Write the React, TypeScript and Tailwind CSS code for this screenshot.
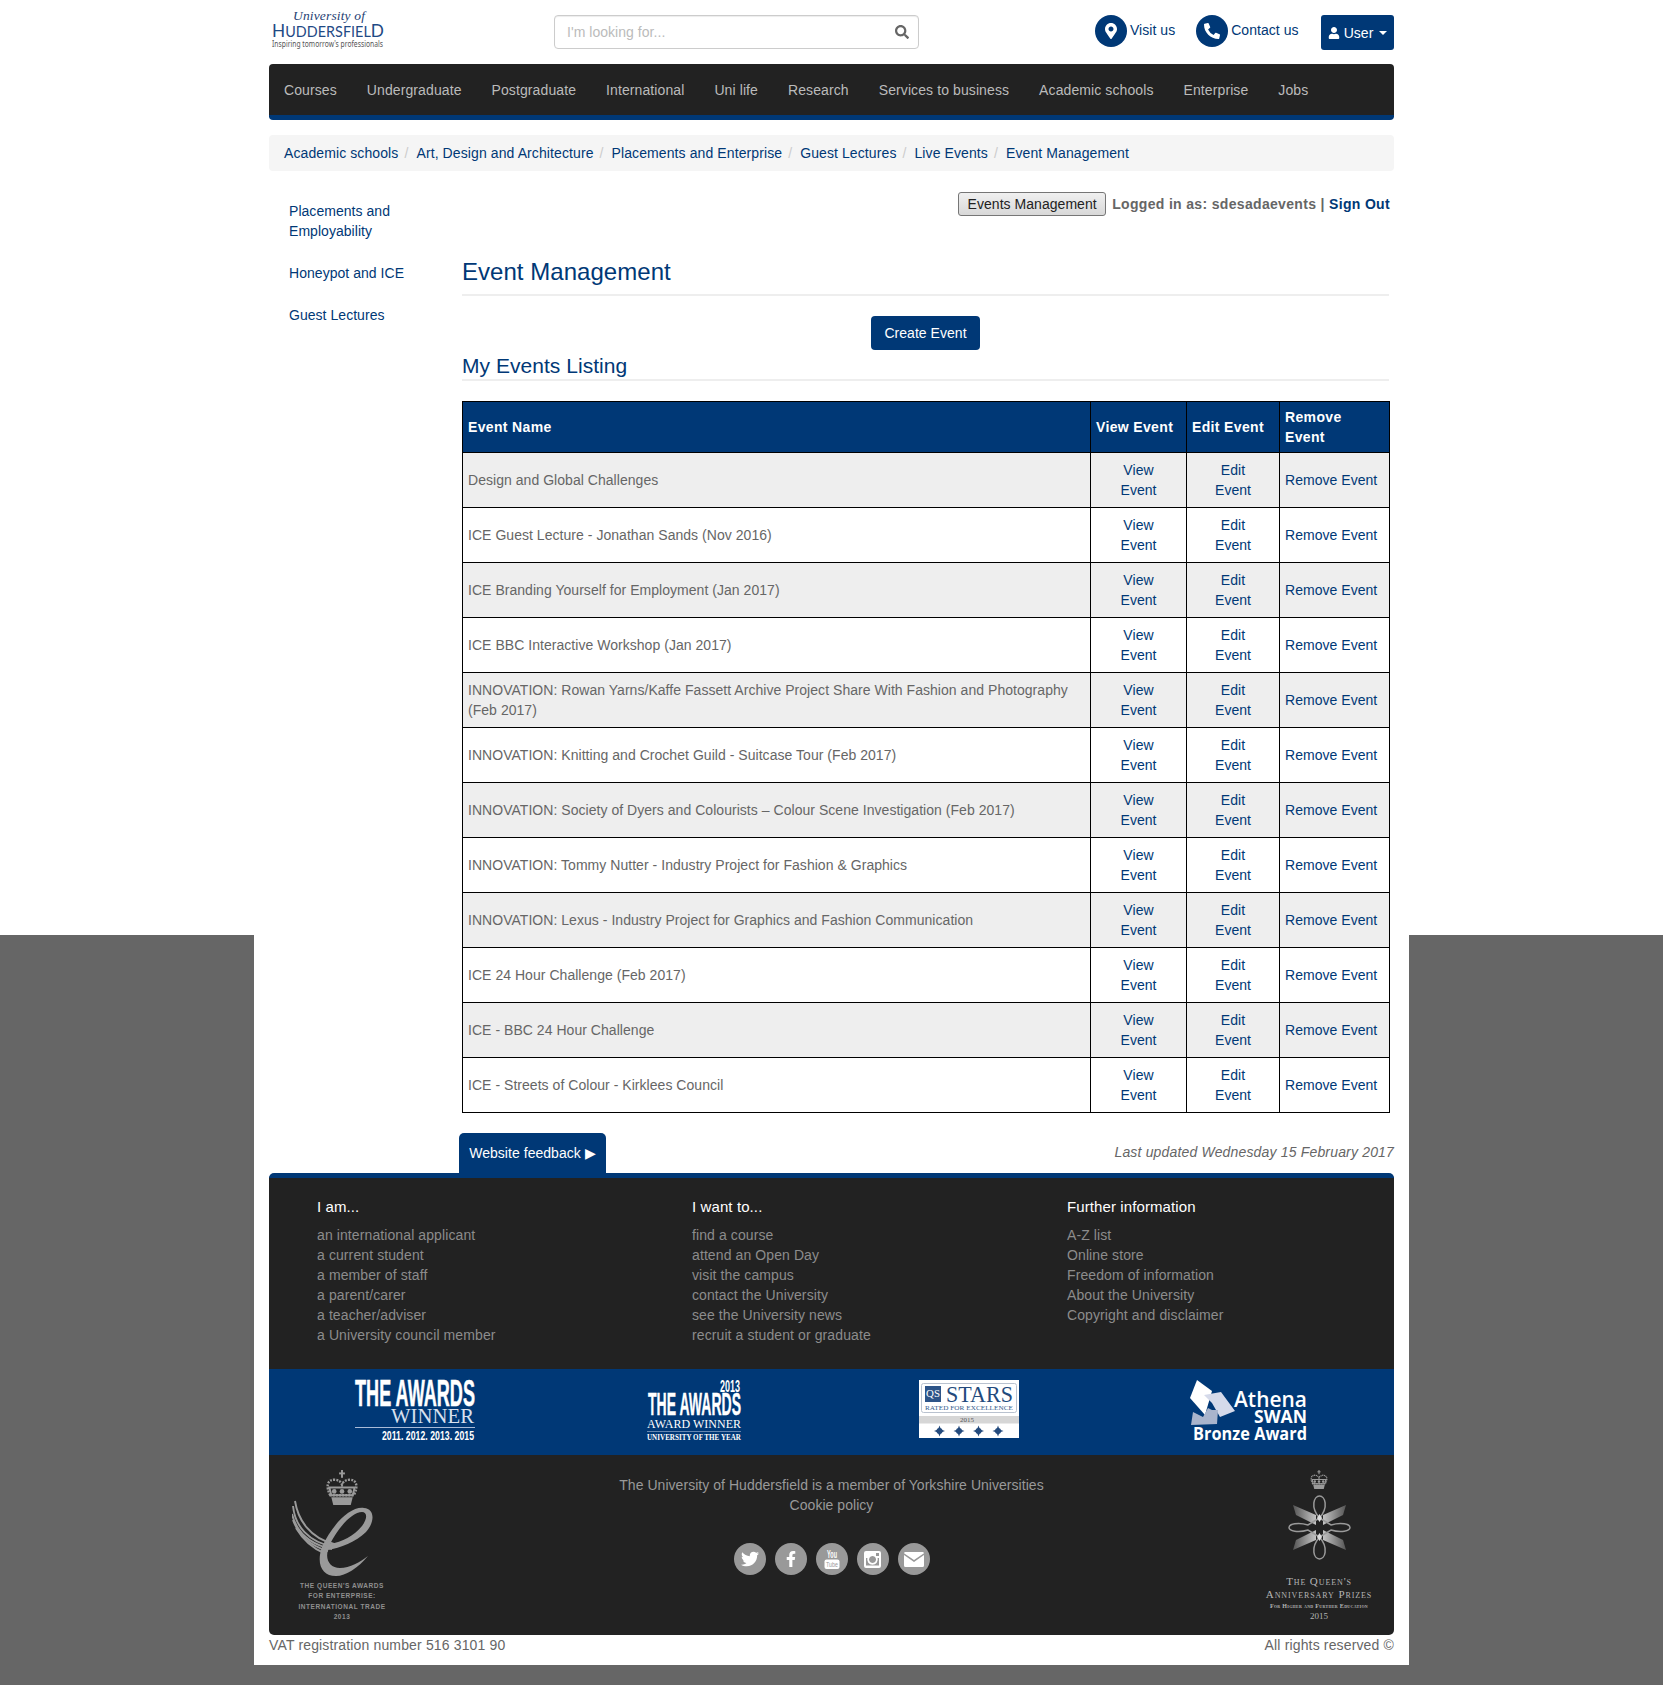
import { FaMapMarkerAlt, FaPhoneAlt, FaSearch, FaUser, FaTwitter, FaFacebookF } from 'react-icons/fa';

const navItems = ['Courses', 'Undergraduate', 'Postgraduate', 'International', 'Uni life', 'Research', 'Services to business', 'Academic schools', 'Enterprise', 'Jobs'];
const crumbs = ['Academic schools', 'Art, Design and Architecture', 'Placements and Enterprise', 'Guest Lectures', 'Live Events', 'Event Management'];

const events = [
    'Design and Global Challenges',
    'ICE Guest Lecture - Jonathan Sands (Nov 2016)',
    'ICE Branding Yourself for Employment (Jan 2017)',
    'ICE BBC Interactive Workshop (Jan 2017)',
    'INNOVATION: Rowan Yarns/Kaffe Fassett Archive Project Share With Fashion and Photography (Feb 2017)',
    'INNOVATION: Knitting and Crochet Guild - Suitcase Tour (Feb 2017)',
    'INNOVATION: Society of Dyers and Colourists – Colour Scene Investigation (Feb 2017)',
    'INNOVATION: Tommy Nutter - Industry Project for Fashion & Graphics',
    'INNOVATION: Lexus - Industry Project for Graphics and Fashion Communication',
    'ICE 24 Hour Challenge (Feb 2017)',
    'ICE - BBC 24 Hour Challenge',
    'ICE - Streets of Colour - Kirklees Council',
];

const footerCols = [
    { title: 'I am...', links: ['an international applicant', 'a current student', 'a member of staff', 'a parent/carer', 'a teacher/adviser', 'a University council member'] },
    { title: 'I want to...', links: ['find a course', 'attend an Open Day', 'visit the campus', 'contact the University', 'see the University news', 'recruit a student or graduate'] },
    { title: 'Further information', links: ['A-Z list', 'Online store', 'Freedom of information', 'About the University', 'Copyright and disclaimer'] },
];

function Crown({ className }: { className: string }) {
    return (
        <svg viewBox="0 0 36 36" className={className} fill="#9a9a9a">
            <rect x="17" y="0" width="2" height="8" />
            <rect x="15" y="2.5" width="6" height="2" />
            <path d="M6 26 C1 17 3 10 10 10 C14 10 17 12 18 15 C19 12 22 10 26 10 C33 10 35 17 30 26 Z" fill="none" stroke="#9a9a9a" strokeWidth="2.5" strokeDasharray="2 1.2" />
            <path d="M5 18 h26 l-2 8 h-22 Z" fill="none" stroke="#9a9a9a" strokeWidth="2" />
            <circle cx="10" cy="22" r="2.4" /><circle cx="18" cy="22" r="2.4" /><circle cx="26" cy="22" r="2.4" />
            <path d="M7 28 h22 l-2 8 h-18 Z" />
        </svg>
    );
}

function QueensE() {
    return (
        <svg viewBox="0 0 82 76" className="h-[76px] w-[82px]" fill="#9a9a9a">
            <path fillRule="evenodd" d="M30 47 C40 25 58 6 72 8 C83 9 83 22 74 32 C64 42 48 48 36 50 C33 60 38 68 48 68 C58 68 68 62 76 56 C66 68 54 76 44 76 C30 76 24 64 30 47 Z M38 44 C50 42 62 36 70 26 C76 18 75 12 70 12 C60 12 46 28 38 44 Z" />
            <g fill="none" stroke="#9a9a9a" strokeWidth="1.9">
                <path d="M3 1 C6 20 18 38 42 44" />
                <path d="M1 6 C3 26 16 42 42 47" />
                <path d="M0 14 C4 30 16 44 40 49" />
                <path d="M1 20 C6 34 18 46 36 51" />
                <path d="M4 28 C10 38 20 48 32 53" />
            </g>
        </svg>
    );
}

function AnniversaryKnot() {
    return (
        <svg viewBox="0 0 63 65" className="h-[65px] w-[63px]" fill="none" stroke="#9a9a9a" strokeWidth="1.5">
            <defs>
                <linearGradient id="wingL" x1="1" x2="0"><stop offset="0" stopColor="#c4c4c4" /><stop offset="1" stopColor="#555" /></linearGradient>
                <linearGradient id="wingR" x1="0" x2="1"><stop offset="0" stopColor="#c4c4c4" /><stop offset="1" stopColor="#555" /></linearGradient>
            </defs>
            <path d="M5 10 L28 20 L28 30 L8 20 Z" fill="url(#wingL)" stroke="none" />
            <path d="M5 55 L28 45 L28 35 L8 45 Z" fill="url(#wingL)" stroke="none" />
            <path d="M58 10 L35 20 L35 30 L55 20 Z" fill="url(#wingR)" stroke="none" />
            <path d="M58 55 L35 45 L35 35 L55 45 Z" fill="url(#wingR)" stroke="none" />
            <path d="M31.5 23 C22 12 26 1 31.5 1 C37 1 41 12 31.5 23 Z" />
            <path d="M31.5 42 C22 53 26 64 31.5 64 C37 64 41 53 31.5 42 Z" />
            <path d="M31.5 23 L20 30 C10 27 1 29 1 32.5 C1 36 10 38 20 35 L31.5 42 L43 35 C53 38 62 36 62 32.5 C62 29 53 27 43 30 Z" />
            <path d="M31.5 19 L34 23 L31.5 27 L29 23 Z M31.5 38 L34 42 L31.5 46 L29 42 Z" fill="#ddd" stroke="none" />
        </svg>
    );
}

function UniLogo() {
    return (
        <svg viewBox="0 0 113 40" className="ml-[3px] mt-[10px] h-[40px] w-[113px] overflow-visible">
            <text x="21" y="10" fontFamily="Liberation Serif" fontStyle="italic" fontSize="13.5" fill="#1f3f74" textLength="72">University of</text>
            <text x="0" y="27" fontFamily="Lato" fill="#1f4a85" textLength="112" lengthAdjust="spacingAndGlyphs">
                <tspan fontSize="18">H</tspan>
                <tspan fontSize="15">UDDERSFIEL</tspan>
                <tspan fontSize="18">D</tspan>
            </text>
            <text x="0" y="37" fontFamily="Noto Sans" fontSize="9" fill="#555" textLength="111" lengthAdjust="spacingAndGlyphs">Inspiring tomorrow's professionals</text>
        </svg>
    );
}

function Logos() {
    return (
        <div className="grid h-[86px] grid-cols-4 items-start bg-[#003876]">
            <svg viewBox="0 0 120 60" className="ml-[86px] mt-[11px] h-[60px] w-[120px] overflow-visible" fill="#fff">
                <text x="0" y="26" fontFamily="Liberation Sans" fontWeight="700" fontSize="36" stroke="#fff" strokeWidth="0.5" textLength="120" lengthAdjust="spacingAndGlyphs">THE AWARDS</text>
                <text x="36" y="43" fontFamily="Liberation Serif" fontSize="21" fill="#d8e0ee" textLength="83" lengthAdjust="spacingAndGlyphs">WINNER</text>
                <rect x="0" y="47" width="120" height="1" fill="#a9bbd8" />
                <text x="27" y="60" fontFamily="Liberation Sans" fontWeight="700" fontSize="12" textLength="92" lengthAdjust="spacingAndGlyphs">2011. 2012. 2013. 2015</text>
            </svg>
            <svg viewBox="0 0 94 60" className="ml-[97px] mt-[11px] h-[60px] w-[94px] overflow-visible" fill="#fff">
                <text x="73" y="12" fontFamily="Liberation Sans" fontWeight="700" fontSize="16" textLength="20" lengthAdjust="spacingAndGlyphs">2013</text>
                <text x="1" y="35" fontFamily="Liberation Sans" fontWeight="700" fontSize="31" stroke="#fff" strokeWidth="0.4" textLength="93" lengthAdjust="spacingAndGlyphs">THE AWARDS</text>
                <text x="0" y="48" fontFamily="Liberation Serif" fontSize="12" textLength="94" lengthAdjust="spacingAndGlyphs">AWARD WINNER</text>
                <rect x="0" y="51" width="94" height="0.6" fill="#a9bbd8" />
                <text x="0" y="60" fontFamily="Liberation Serif" fontSize="8" fontWeight="700" textLength="94" lengthAdjust="spacingAndGlyphs">UNIVERSITY OF THE YEAR</text>
            </svg>
            <svg viewBox="0 0 100 58" className="ml-[87px] mt-[11px] h-[58px] w-[100px] overflow-visible">
                <rect width="100" height="58" fill="#fff" />
                <rect x="2.5" y="3.5" width="95" height="29" rx="2" fill="none" stroke="#b9c2cf" />
                <rect x="6" y="6" width="16" height="16" fill="#2d5488" />
                <text x="7" y="17" fontFamily="Liberation Serif" fontSize="10" fill="#fff" textLength="14" lengthAdjust="spacingAndGlyphs">QS</text>
                <text x="27" y="22" fontFamily="Liberation Serif" fontSize="22.5" fill="#234a7d" textLength="67" lengthAdjust="spacingAndGlyphs">STARS</text>
                <text x="6" y="30" fontFamily="Liberation Serif" fontSize="7" fill="#345b8c" textLength="88" lengthAdjust="spacingAndGlyphs">RATED FOR EXCELLENCE</text>
                <rect x="0" y="36" width="100" height="7.5" fill="#d6d6d6" />
                <text x="41" y="42" fontFamily="Liberation Serif" fontSize="7" fill="#555">2015</text>
                {[20.5, 40, 59.5, 79].map((x) => (
                    <g key={x} transform={`translate(${x} 51)`} fill="#234a7d">
                        <path d="M0 -5.5 L1.5 -1.5 L5.5 0 L1.5 1.5 L0 5.5 L-1.5 1.5 L-5.5 0 L-1.5 -1.5 Z" />
                        <circle r="3" />
                    </g>
                ))}
            </svg>
            <svg viewBox="0 0 118 60" className="ml-[76px] mt-[12px] h-[60px] w-[118px] overflow-visible" fill="#fff">
                <path d="M8 -1 L23 10 L16 34 L1 17 Z" fill="#fff" />
                <path d="M15 14 L32 11 L46 30 L31 36 L23 22 Z" fill="#d5daea" />
                <path d="M4 31 L14 36 L19 27 L23 29 L29 29 L28 43 L2 44 Z" fill="#a9b4cc" />
                <text x="45" y="26" fontFamily="Open Sans" fontWeight="600" fontSize="21" textLength="73" lengthAdjust="spacingAndGlyphs">Athena</text>
                <text x="65" y="42" fontFamily="Open Sans" fontWeight="700" fontSize="17" textLength="53" lengthAdjust="spacingAndGlyphs">SWAN</text>
                <text x="4" y="59" fontFamily="Open Sans" fontWeight="700" fontSize="17" textLength="114" lengthAdjust="spacingAndGlyphs">Bronze Award</text>
            </svg>
        </div>
    );
}

function SocialIcons() {
    const circle = 'flex size-8 items-center justify-center rounded-full bg-[#999] text-white';
    return (
        <div className="mt-[28px] flex justify-center gap-[9px]">
            <a className={circle}><FaTwitter className="size-[18px]" /></a>
            <a className={circle}><FaFacebookF className="size-[16px]" /></a>
            <a className={circle}>
                <svg viewBox="0 0 16 19" className="h-[19px] w-[16px] overflow-visible">
                    <text x="3" y="8" fontFamily="Liberation Sans" fontWeight="700" fontSize="10" fill="#fff" textLength="10" lengthAdjust="spacingAndGlyphs">You</text>
                    <rect x="0.5" y="9.5" width="15" height="9.5" rx="2" fill="#fff" />
                    <text x="2" y="17" fontFamily="Liberation Sans" fontSize="8" fill="#999" textLength="12" lengthAdjust="spacingAndGlyphs">Tube</text>
                </svg>
            </a>
            <a className={circle}>
                <svg viewBox="0 0 17 17" className="size-[17px]">
                    <path fillRule="evenodd" fill="#fff" d="M2 0 H15 A2 2 0 0 1 17 2 V15 A2 2 0 0 1 15 17 H2 A2 2 0 0 1 0 15 V2 A2 2 0 0 1 2 0 Z M12 2 V5 H15 V2 Z M8.5 5 A3.5 3.5 0 1 0 8.6 5 Z M2 7 V14.5 H15 V7 H13.6 A5.3 5.3 0 1 1 3.4 7 Z" />
                </svg>
            </a>
            <a className={circle}>
                <svg viewBox="0 0 20 15" className="h-[15px] w-[20px]" fill="#fff">
                    <path d="M1.5 0 H18.5 A1.5 1.5 0 0 1 20 1.2 L10 8 L0 1.2 A1.5 1.5 0 0 1 1.5 0 Z" />
                    <path d="M0 3 L10 10 L20 3 V13.5 A1.5 1.5 0 0 1 18.5 15 H1.5 A1.5 1.5 0 0 1 0 13.5 Z" />
                </svg>
            </a>
        </div>
    );
}

function Footer() {
    return (
        <footer className="overflow-hidden rounded-[5px] border-t-[5px] border-[#003876] bg-[#222]">
            <div className="grid h-[191px] grid-cols-[375px_375px_1fr] pl-[48px] pt-[19px] tracking-[0.1px]">
                {footerCols.map((col) => (
                    <div key={col.title}>
                        <h4 className="mb-[8px] text-[15px] leading-5 text-white">{col.title}</h4>
                        {col.links.map((link) => (
                            <a key={link} className="block text-sm leading-5 text-[#8c8c8c]">{link}</a>
                        ))}
                    </div>
                ))}
            </div>
            <Logos />
            <div className="grid h-[180px] grid-cols-[150px_1fr_150px]">
                <div className="ml-[23px] mt-[15px] flex w-[100px] flex-col items-center">
                    <Crown className="-mb-[5px] h-[35px] w-[36px]" />
                    <div className="self-start"><QueensE /></div>
                    <p className="mt-[5px] whitespace-nowrap text-center text-[6.5px] font-bold leading-[10.4px] tracking-[0.55px] text-[#8f8f8f]">
                        <span className="block">THE QUEEN'S AWARDS</span>
                        <span className="block">FOR ENTERPRISE:</span>
                        <span className="block">INTERNATIONAL TRADE</span>
                        <span className="block">2013</span>
                    </p>
                </div>
                <div className="pt-[20px] text-center text-sm leading-5 text-[#999]">
                    <p>The University of Huddersfield is a member of Yorkshire Universities</p>
                    <p>Cookie policy</p>
                    <SocialIcons />
                </div>
                <div className="ml-auto mr-[20px] mt-[15px] flex w-[110px] flex-col items-center font-['Liberation_Serif',serif] text-[#b5b5b5]">
                    <Crown className="h-[19px] w-[20px]" />
                    <div className="mt-[6px]"><AnniversaryKnot /></div>
                    <p className="mt-[15px] text-[11px] leading-[13px] tracking-[0.9px] [font-variant:small-caps]">The Queen's</p>
                    <p className="whitespace-nowrap text-[11px] leading-[13px] tracking-[0.9px] [font-variant:small-caps]">Anniversary Prizes</p>
                    <p className="whitespace-nowrap text-[6px] font-bold leading-[10px] tracking-[0.3px] [font-variant:small-caps]">For Higher and Further Education</p>
                    <p className="text-[9px] leading-[10px]">2015</p>
                </div>
            </div>
        </footer>
    );
}

export default function App() {
    return (
        <div className="h-[1685px] overflow-hidden bg-[linear-gradient(#fff_935px,#666_935px)] font-['Liberation_Sans',Arial,sans-serif] text-sm leading-5 tracking-[0.04px] text-[#666]">
            <div className="mx-auto h-[1665px] w-[1155px] bg-white px-[15px]">
                <header className="flex h-[64px] items-start">
                    <UniLogo />
                    <div className="ml-[169px] mt-[15px] flex h-[34px] w-[365px] items-center justify-between rounded border border-[#ccc] pl-3 pr-[9px] shadow-[inset_0_1px_1px_rgba(0,0,0,0.075)]">
                        <span className="text-[#bbb]">I'm looking for...</span>
                        <FaSearch className="size-[14px] text-[#666]" />
                    </div>
                    <a className="ml-[176px] mt-[15px] flex items-start gap-[3px] text-[#003876]">
                        <span className="flex size-8 items-center justify-center rounded-full bg-[#003876] text-white"><FaMapMarkerAlt className="size-[16px]" /></span>
                        <span className="mt-[5px]">Visit us</span>
                    </a>
                    <a className="ml-[21px] mt-[15px] flex items-start gap-[3px] text-[#003876]">
                        <span className="flex size-8 items-center justify-center rounded-full bg-[#003876] text-white"><FaPhoneAlt className="size-[16px]" /></span>
                        <span className="mt-[5px]">Contact us</span>
                    </a>
                    <button className="ml-auto mt-[15px] flex h-[35px] w-[73px] items-center justify-center gap-1 rounded-[3px] bg-[#003876] text-white">
                        <FaUser className="size-3" />
                        <span>User</span>
                        <span className="ml-0.5 h-0 w-0 border-x-4 border-t-4 border-x-transparent border-t-white" />
                    </button>
                </header>

                <nav className="flex h-[56px] rounded border-b-[5px] border-[#003876] bg-[#222] tracking-[0.1px]">
                    {navItems.map((item) => (
                        <a key={item} className="px-[15px] pt-[16px] text-[#bbb]">{item}</a>
                    ))}
                </nav>

                <ol className="mt-[15px] flex h-[36px] items-center rounded bg-[#f5f5f5] px-[15px] tracking-[0.1px]">
                    {crumbs.map((crumb, i) => (
                        <li key={crumb} className="flex text-[#003876]">
                            {i > 0 && <span className="pl-[6px] pr-[8px] text-[#ccc]">/</span>}
                            <a>{crumb}</a>
                        </li>
                    ))}
                </ol>

                <div className="flex">
                    <aside className="w-[193px] pl-[20px] pt-[30px] text-[#003876]">
                        <a className="block w-[120px]">Placements and Employability</a>
                        <a className="mt-[22px] block">Honeypot and ICE</a>
                        <a className="mt-[22px] block">Guest Lectures</a>
                    </aside>
                    <main className="w-[927px]">
                        <div className="-mr-[1px] mt-[21px] flex items-center justify-end gap-[6px]">
                            <button className="h-[24px] w-[148px] rounded-[3px] border border-[#767676] bg-[linear-gradient(#f0f0f0,#d8d8d8)] text-[#222]">Events Management</button>
                            <span className="font-bold tracking-[0.33px]">
                                Logged in as: sdesadaevents | <a className="text-[#003876]">Sign Out</a>
                            </span>
                        </div>
                        <h1 className="mt-[36px] border-b-2 border-[#eee] pb-[2px] text-2xl leading-[40px] text-[#003876]">Event Management</h1>
                        <div className="mt-5 flex justify-center">
                            <button className="h-[34px] w-[109px] rounded bg-[#003876] text-white">Create Event</button>
                        </div>
                        <h2 className="mt-[2px] border-b-2 border-[#eee] text-[21px] leading-[27px] text-[#003876]">My Events Listing</h2>
                        <table className="mt-5 w-full table-fixed border-collapse border border-black">
                            <colgroup>
                                <col className="w-[628px]" />
                                <col className="w-[96px]" />
                                <col className="w-[93px]" />
                                <col className="w-[110px]" />
                            </colgroup>
                            <thead className="bg-[#003876] text-left font-bold tracking-[0.35px] text-white">
                                <tr className="h-[51px]">
                                    <th className="border border-black px-[5px]">Event Name</th>
                                    <th className="border border-black px-[5px]">View Event</th>
                                    <th className="border border-black px-[5px]">Edit Event</th>
                                    <th className="border border-black pl-[5px] pr-[20px]">Remove Event</th>
                                </tr>
                            </thead>
                            <tbody>
                                {events.map((name, i) => (
                                    <tr key={name} className={i % 2 === 0 ? 'h-[55px] bg-[#eee]' : 'h-[55px] bg-white'}>
                                        <td className="border border-black px-[5px]">{name}</td>
                                        <td className="border border-black px-[15px] text-center text-[#003876]">View Event</td>
                                        <td className="border border-black px-[15px] text-center text-[#003876]">Edit Event</td>
                                        <td className="border border-black px-[5px] text-[#003876]">Remove Event</td>
                                    </tr>
                                ))}
                            </tbody>
                        </table>
                    </main>
                </div>

                <div className="mt-[20px] flex h-[40px] items-start justify-between">
                    <a className="ml-[190px] flex h-[40px] w-[147px] items-center justify-center rounded-t-[5px] bg-[#003876] text-white">Website feedback ▶</a>
                    <em className="mt-[9px] tracking-[0.17px]">Last updated Wednesday 15 February 2017</em>
                </div>

                <Footer />

                <div className="flex h-[20px] justify-between tracking-[0.15px]">
                    <span>VAT registration number 516 3101 90</span>
                    <span>All rights reserved ©</span>
                </div>
            </div>
        </div>
    );
}
